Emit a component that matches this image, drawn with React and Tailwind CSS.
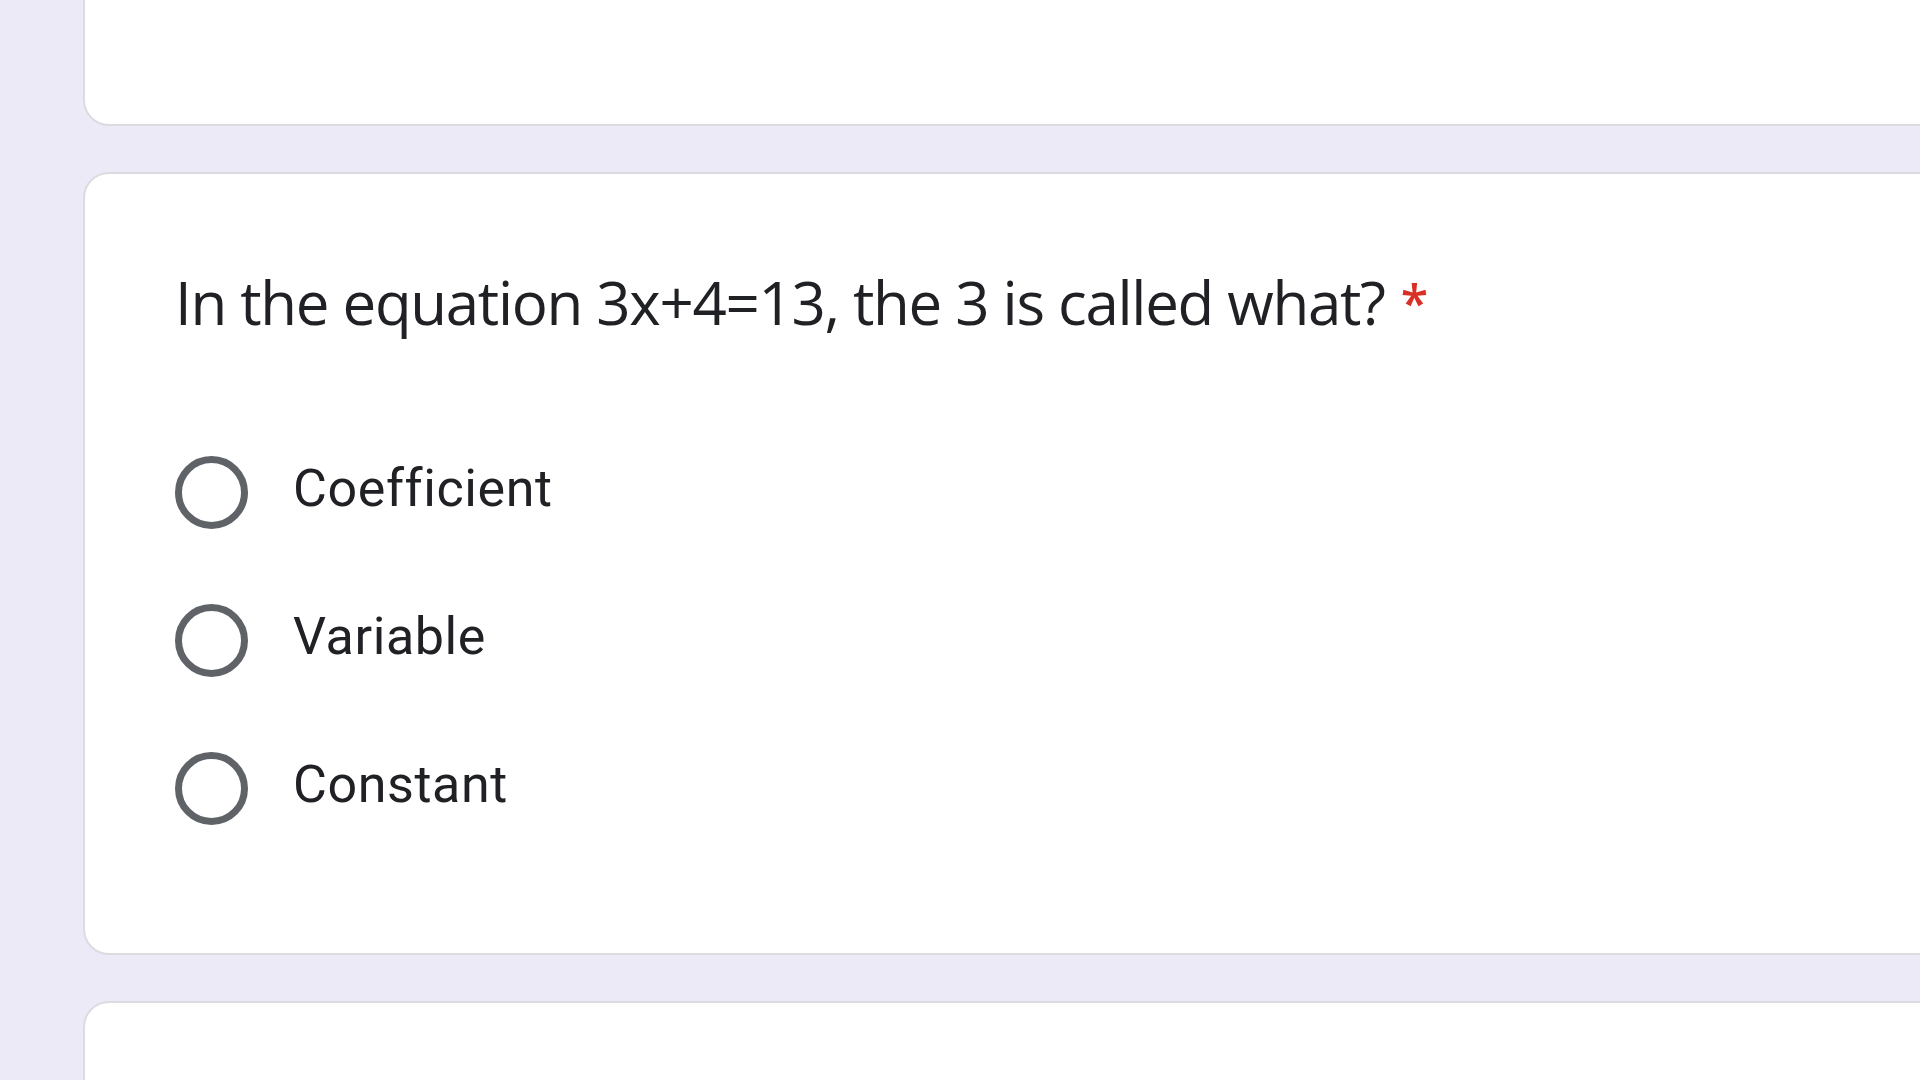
export default function App() {
  const options = ["Coefficient", "Variable", "Constant"];
  return (
    <div className="w-screen h-screen overflow-hidden bg-[#edeaf8]">
      <div className="flex flex-col gap-[46px] pl-[83px] -mr-[60px]">
        <div className="-mt-[100px] h-[226px] bg-white border-2 border-[#dadce0] rounded-[26px]" />
        <div className="h-[783px] bg-white border-2 border-[#dadce0] rounded-[26px] pl-[90px] pt-[92px]">
          <div
            className="h-[72px] text-[60px] leading-[72px] tracking-[-1.3px] text-[#202124] whitespace-nowrap"
            style={{ fontFamily: '"Open Sans", sans-serif' }}
          >
            In the equation 3x+4=13, the 3 is called what?
            <span className="text-[#d93025] text-[50px] leading-none font-semibold ml-[16px] align-[4px]">*</span>
          </div>
          <div className="flex flex-col gap-[75px] mt-[118px]">
            {options.map((o) => (
              <div key={o} className="flex items-center h-[73px] gap-[45px]">
                <div className="w-[73px] h-[73px] rounded-full border-[7px] border-[#5f6368] shrink-0" />
                <div
                  className="text-[52px] leading-[60px] tracking-[0.6px] text-[#202124] pb-[7px] [font-variant-ligatures:none]"
                  style={{ fontFamily: "Roboto, sans-serif" }}
                >
                  {o}
                </div>
              </div>
            ))}
          </div>
        </div>
        <div className="h-[300px] bg-white border-2 border-[#dadce0] rounded-[26px]" />
      </div>
    </div>
  );
}
